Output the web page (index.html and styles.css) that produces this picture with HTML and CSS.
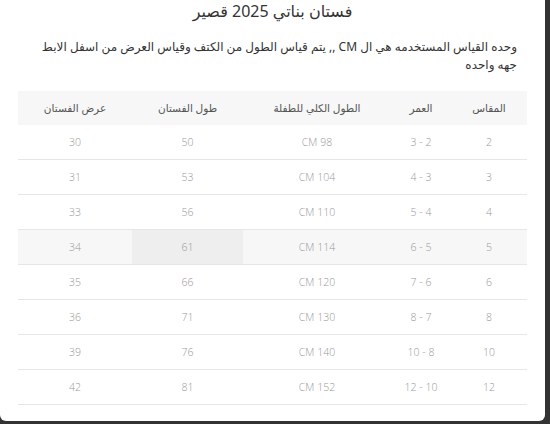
FILE: index.html
```html
<!DOCTYPE html>
<html lang="ar" dir="rtl">
<head>
<meta charset="utf-8">
<link rel="stylesheet" href="styles.css">
</head>
<body>
<div class="modal">
  <h1 class="title">فستان بناتي 2025 قصير</h1>
  <p class="desc">وحده القياس المستخدمه هي ال CM ,, يتم قياس الطول من الكتف وقياس العرض من اسفل الابط جهه واحده</p>
  <table class="sizes">
    <colgroup>
      <col class="c1"><col class="c2"><col class="c3"><col class="c4"><col class="c5">
    </colgroup>
    <thead>
      <tr><th>المقاس</th><th>العمر</th><th>الطول الكلي للطفلة</th><th>طول الفستان</th><th>عرض الفستان</th></tr>
    </thead>
    <tbody>
      <tr><td>2</td><td>2 - 3</td><td>CM 98</td><td>50</td><td>30</td></tr>
      <tr><td>3</td><td>3 - 4</td><td>CM 104</td><td>53</td><td>31</td></tr>
      <tr><td>4</td><td>4 - 5</td><td>CM 110</td><td>56</td><td>33</td></tr>
      <tr class="hover"><td>5</td><td>5 - 6</td><td>CM 114</td><td class="hcell">61</td><td>34</td></tr>
      <tr><td>6</td><td>6 - 7</td><td>CM 120</td><td>66</td><td>35</td></tr>
      <tr><td>8</td><td>7 - 8</td><td>CM 130</td><td>71</td><td>36</td></tr>
      <tr><td>10</td><td>8 - 10</td><td>CM 140</td><td>76</td><td>39</td></tr>
      <tr><td>12</td><td>10 - 12</td><td>CM 152</td><td>81</td><td>42</td></tr>
    </tbody>
  </table>
</div>
</body>
</html>
```

FILE: styles.css
```css
html, body {
  margin: 0;
  padding: 0;
  height: 100%;
}
body {
  background: #333;
  font-family: "Noto Sans", "DejaVu Sans", sans-serif;
  overflow: hidden;
}
.modal {
  width: 545px;
  height: 421px;
  margin-right: 5px;
  background: #fff;
  border-radius: 0 0 6px 6px;
  box-sizing: border-box;
  padding: 0 18px;
  overflow: hidden;
}
.title {
  margin: 0;
  font-size: 16px;
  font-weight: 400;
  color: #333;
  text-align: center;
  line-height: 22px;
}
.desc {
  margin: 16px 10px 0 14px;
  font-size: 12px;
  line-height: 18px;
  color: #333;
  text-align: right;
  height: 36px;
}
.sizes {
  margin-top: 17px;
  width: 509px;
  border-collapse: collapse;
  table-layout: fixed;
  font-family: "Open Sans", "Noto Sans", "DejaVu Sans", sans-serif;
  font-size: 10.5px;
}
.c1 { width: 76px; }
.c2 { width: 60px; }
.c3 { width: 148px; }
.c4 { width: 111px; }
.c5 { width: 114px; }
.sizes th {
  background: #f7f7f7;
  height: 34px;
  padding: 0;
  font-weight: 400;
  color: #555;
  text-align: center;
}
.sizes td {
  height: 34px;
  padding: 0;
  text-align: center;
  color: #999;
  font-weight: 300;
  border-bottom: 1px solid #e6e6e6;
}
.sizes tr.hover td { background: #f7f7f7; }
.sizes tr.hover td.hcell { background: #eeeeee; }
```
